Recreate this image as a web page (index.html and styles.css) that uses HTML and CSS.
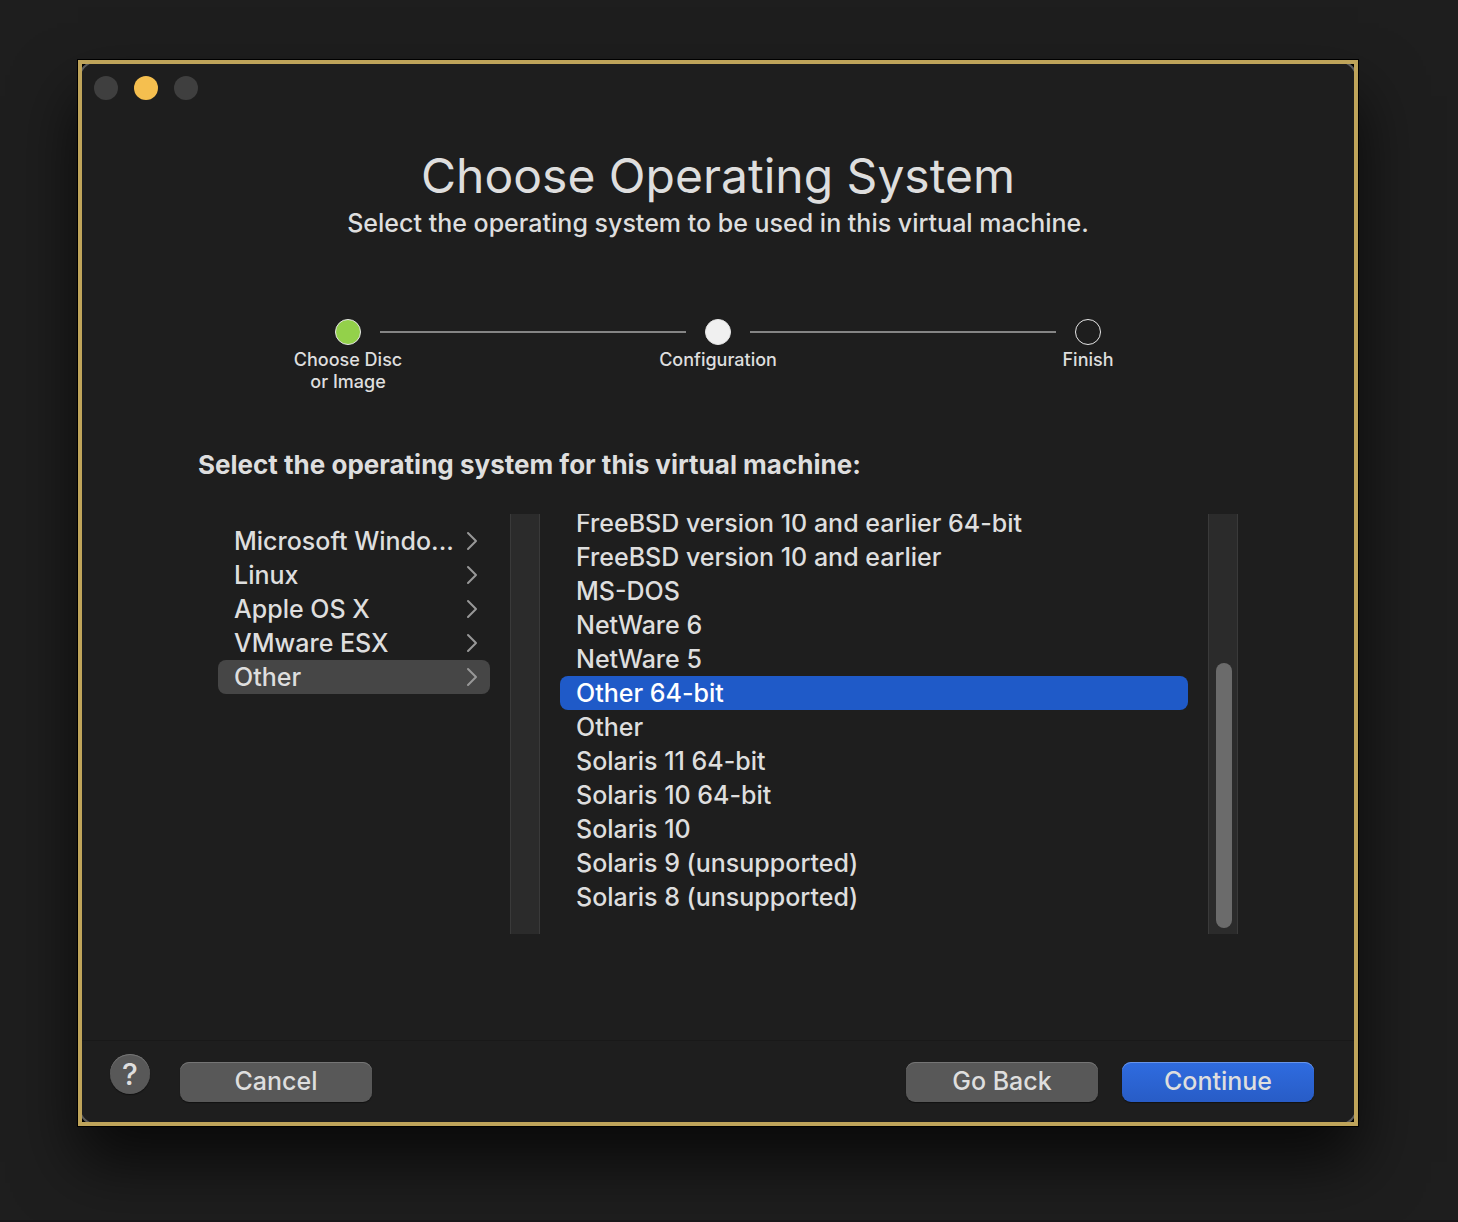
FILE: index.html
```html
<!DOCTYPE html>
<html lang="en">
<head>
<meta charset="utf-8">
<meta name="viewport" content="width=device-width, initial-scale=1">
<title>Choose Operating System</title>
<link rel="stylesheet" href="styles.css">
</head>
<body>
<svg class="sprite" aria-hidden="true">
  <symbol id="chevron" viewBox="0 0 12 20"><path d="M2 2 L10 10 L2 18" fill="none" stroke="currentColor" stroke-width="2" stroke-linecap="round" stroke-linejoin="round"/></symbol>
</svg>
<div class="frame">
  <main class="window">
    <div class="titlebar">
      <button class="light" type="button" aria-label="Close"></button>
      <button class="light light-minimize" type="button" aria-label="Minimize"></button>
      <button class="light" type="button" aria-label="Zoom"></button>
    </div>
    <header class="intro">
      <h1 class="title">Choose Operating System</h1>
      <p class="subtitle">Select the operating system to be used in this virtual machine.</p>
    </header>
    <ol class="steps">
      <li class="step"><span class="dot dot-done"></span><span class="step-label">Choose Disc<br>or Image</span></li>
      <li class="rule" role="presentation"></li>
      <li class="step" aria-current="step"><span class="dot dot-current"></span><span class="step-label">Configuration</span></li>
      <li class="rule" role="presentation"></li>
      <li class="step"><span class="dot"></span><span class="step-label">Finish</span></li>
    </ol>
    <section class="chooser">
      <h2 class="prompt">Select the operating system for this virtual machine:</h2>
      <div class="browser">
        <div class="column families">
          <button class="row" type="button"><span class="name">Microsoft Windo...</span><svg class="chevron"><use href="#chevron"/></svg></button>
          <button class="row" type="button"><span class="name">Linux</span><svg class="chevron"><use href="#chevron"/></svg></button>
          <button class="row" type="button"><span class="name">Apple OS X</span><svg class="chevron"><use href="#chevron"/></svg></button>
          <button class="row" type="button"><span class="name">VMware ESX</span><svg class="chevron"><use href="#chevron"/></svg></button>
          <button class="row row-open" type="button"><span class="name">Other</span><svg class="chevron"><use href="#chevron"/></svg></button>
        </div>
        <div class="track"></div>
        <div class="column versions">
          <button class="row" type="button">FreeBSD version 10 and earlier 64-bit</button>
          <button class="row" type="button">FreeBSD version 10 and earlier</button>
          <button class="row" type="button">MS-DOS</button>
          <button class="row" type="button">NetWare 6</button>
          <button class="row" type="button">NetWare 5</button>
          <button class="row row-selected" type="button">Other 64-bit</button>
          <button class="row" type="button">Other</button>
          <button class="row" type="button">Solaris 11 64-bit</button>
          <button class="row" type="button">Solaris 10 64-bit</button>
          <button class="row" type="button">Solaris 10</button>
          <button class="row" type="button">Solaris 9 (unsupported)</button>
          <button class="row" type="button">Solaris 8 (unsupported)</button>
        </div>
        <div class="track"><div class="thumb"></div></div>
      </div>
    </section>
    <footer class="actions">
      <button class="help" type="button" aria-label="Help">?</button>
      <button class="button" type="button">Cancel</button>
      <span class="spacer"></span>
      <button class="button" type="button">Go Back</button>
      <button class="button button-primary" type="button">Continue</button>
    </footer>
  </main>
</div>
</body>
</html>
```
FILE: styles.css
```css
* { box-sizing: border-box; }

body {
  margin: 0;
  min-height: 100vh;
  padding: 60px 100px 94px 78px;
  border-bottom: 2px solid #191619;
  background: #1e1e1e;
  color: #dedede;
  font: 500 25px/34px Inter, "Liberation Sans", sans-serif;
}

button {
  margin: 0;
  padding: 0;
  border: 0;
  background: none;
  color: inherit;
  font: inherit;
}

.sprite { position: absolute; width: 0; height: 0; }

.frame {
  overflow: hidden;
  border: 4px solid #bfa45a;
  background: #000;
  box-shadow: 0 0 0 1px #000, 0 36px 60px rgba(0, 0, 0, 0.7);
}

/* The panel runs under the frame so that its outline shows only at the corners. */
.window {
  margin: -4px;
  padding: 4px;
  border-radius: 20px;
  background: #1e1e1e;
  box-shadow: inset 0 0 0 2px #5c5c5c;
}

.titlebar { display: flex; gap: 16px; padding: 12px; }
.light { width: 24px; height: 24px; border-radius: 50%; background: #3f3f3f; }
.light-minimize { background: #f5bf4f; }

.intro { padding-top: 34px; text-align: center; }
.title { margin: 0; font-size: 48px; font-weight: 400; line-height: 60px; }
.subtitle { margin: 0; }

.steps {
  display: grid;
  grid-template-columns: 64px 1fr 64px 1fr 64px;
  height: 74px;
  margin: 79px 234px 0;
  padding: 0;
  list-style: none;
}
.step { display: flex; flex-direction: column; align-items: center; gap: 4px; }
.dot { flex: none; width: 26px; height: 26px; border: 1px solid #e6e6e6; border-radius: 50%; }
.dot-done { background: #93d14a; }
.dot-current { background: #f0f0f0; }
.step-label { font-size: 18px; line-height: 22px; text-align: center; white-space: nowrap; }
.rule { height: 2px; margin-top: 12px; background: #858585; }

.chooser { padding: 55px 116px 106px; }
.prompt { margin: 0 0 32px; font-size: 26px; font-weight: 700; line-height: 34px; }

.browser { display: grid; grid-template-columns: 312px 30px 1fr 30px; height: 420px; }
.column { display: flex; flex-direction: column; min-width: 0; min-height: 0; padding: 10px 20px; overflow: hidden; }
.versions { justify-content: flex-end; padding: 0 20px 20px; }
.row {
  display: flex;
  flex: none;
  align-items: center;
  justify-content: space-between;
  height: 34px;
  padding: 0 12px 0 16px;
  border-radius: 8px;
  text-align: left;
  white-space: nowrap;
}
.row-open { background: #464646; }
.row-selected { background: #1f5ac8; color: #fff; }
.name { flex: 1; }
.chevron { flex: none; width: 12px; height: 20px; color: #989898; }

.track {
  display: flex;
  align-items: flex-end;
  justify-content: center;
  padding-bottom: 6px;
  border: solid #3a3a3a;
  border-width: 0 1px;
  background: #2b2b2b;
}
.thumb { width: 16px; height: 265px; margin-left: 2px; border-radius: 8px; background: #6b6b6b; }

.actions {
  display: flex;
  gap: 24px;
  height: 82px;
  padding: 21px 40px 20px 28px;
  border-top: 1px solid #191919;
}
.help, .button {
  background: #585858;
  box-shadow: inset 0 1px #757575, 0 1px 1px #111;
}
.help { width: 40px; height: 40px; margin: -8px 6px 0 0; border-radius: 50%; font-size: 30px; }
.button { width: 192px; height: 40px; padding-bottom: 2px; border-radius: 9px; }
.button-primary {
  background: linear-gradient(#2f6ce0, #285cc6);
  box-shadow: inset 0 1px #6895ea, 0 1px 1px #111;
}
.spacer { flex: 1; margin-right: -24px; }
```
